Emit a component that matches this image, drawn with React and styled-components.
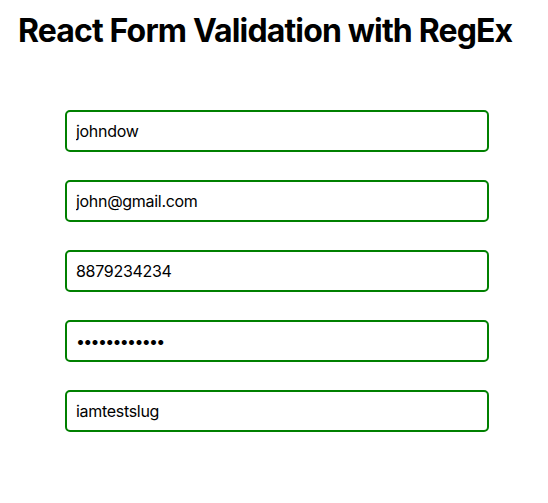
import React from "react";
import styled, { createGlobalStyle } from "styled-components";

const GlobalStyle = createGlobalStyle`
  body {
    margin: 8px;
    background: #ffffff;
    font-family: Inter, "Noto Sans", Arial, sans-serif;
    color: #000;
  }
`;

const Page = styled.div`
  display: flex;
  flex-direction: column;
`;

const Title = styled.h1`
  margin: 3px 0 0 10px;
  font-size: 32px;
  line-height: 39px;
  font-weight: 700;
  letter-spacing: -0.85px;
`;

const Form = styled.form`
  display: flex;
  flex-direction: column;
  gap: 28px;
  margin: 60px 0 0 57px;
  width: 424px;
`;

const Field = styled.input`
  box-sizing: border-box;
  width: 100%;
  height: 42px;
  padding: 0 9px;
  border: 2px solid #008000;
  border-radius: 5px;
  font-family: Inter, "Noto Sans", Arial, sans-serif;
  font-size: 16px;
  letter-spacing: ${(p) => (p.$secret ? "-1.7px" : "-0.3px")};
  color: #000;
  background: #fff;
  outline: none;
`;

const fields = [
  { type: "text", value: "johndow" },
  { type: "email", value: "john@gmail.com" },
  { type: "text", value: "8879234234" },
  { type: "password", value: "iamtest12345" },
  { type: "text", value: "iamtestslug" },
];

export default function App() {
  return (
    <>
      <GlobalStyle />
      <Page>
        <Title>React Form Validation with RegEx</Title>
        <Form onSubmit={(e) => e.preventDefault()}>
          {fields.map((f, i) => (
            <Field
              key={i}
              type={f.type}
              $secret={f.type === "password"}
              defaultValue={f.value}
            />
          ))}
        </Form>
      </Page>
    </>
  );
}
